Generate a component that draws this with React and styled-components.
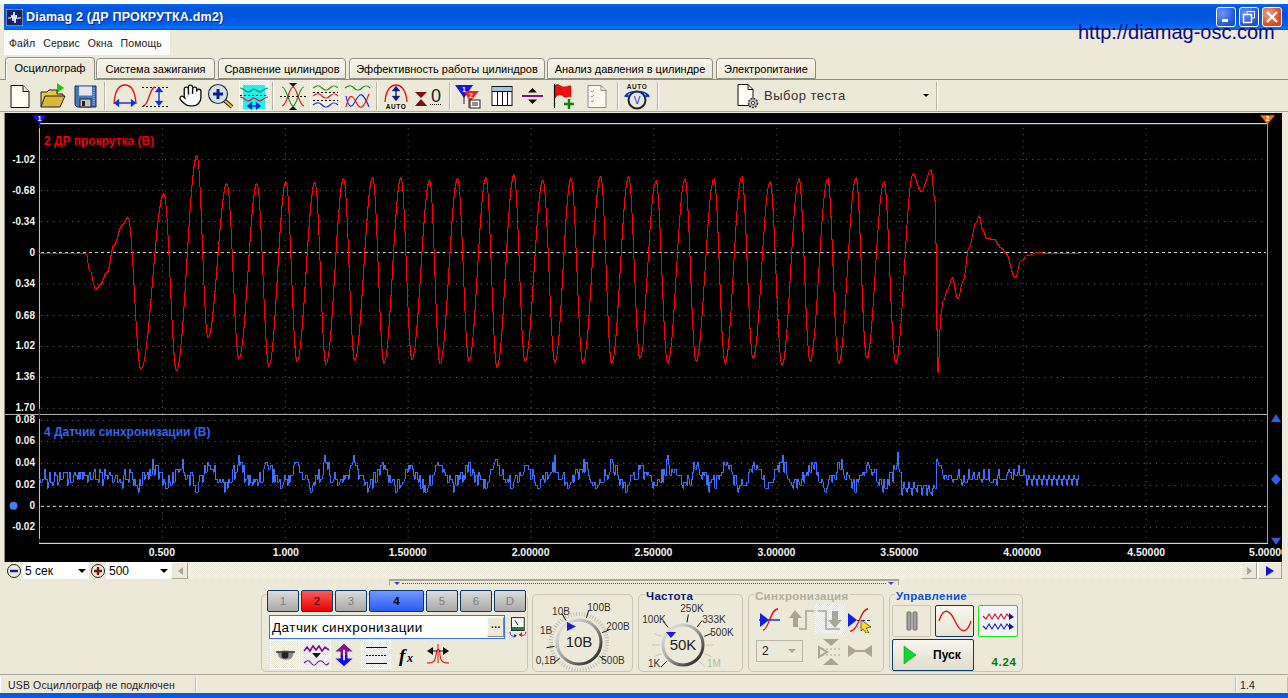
import styled, { createGlobalStyle } from 'styled-components';
import { Hand } from 'lucide-react';

const GlobalStyle = createGlobalStyle`
  html, body { margin: 0; padding: 0; background: #ece9d8; overflow: hidden; }
  * { box-sizing: border-box; }
`;

const FONT = '"Liberation Sans", Arial, sans-serif';
const DITHER = 'repeating-conic-gradient(#fff 0 25%, #e4e0cf 0 50%) 0 0 / 2px 2px';

// ---- window frame ----
const Page = styled.div`
  position: relative;
  width: 1288px;
  height: 698px;
  overflow: hidden;
  display: flex;
  flex-direction: column;
  background: #ece9d8;
  border-top: 4px solid #fbfbf8;
  font-family: ${FONT};
  color: #000;
`;

const TitleBar = styled.div`
  height: 26px;
  margin-left: 4px;
  flex: none;
  display: flex;
  align-items: center;
  padding: 0 6px 0 2px;
  background: linear-gradient(#0a6af0 0, #0058e0 12%, #0054dc 50%, #0060ee 80%, #0a72fa 92%, #0050d0 100%);
`;

const TitleText = styled.span`
  margin-left: 3px;
  flex: 1;
  color: #fff;
  font-size: 12.5px;
  font-weight: bold;
  letter-spacing: 0.2px;
  text-shadow: 1px 1px 0 #0a2a90;
`;

const WinButton = styled.div`
  width: 20px;
  height: 20px;
  margin-left: 3px;
  border: 1px solid #fff;
  border-radius: 3px;
  display: flex;
  align-items: center;
  justify-content: center;
  background: ${p => p.$close
    ? 'radial-gradient(circle at 30% 30%, #f0a080, #d8481c 70%)'
    : 'radial-gradient(circle at 30% 30%, #6a98f8, #1c50d8 75%)'};
`;

const Watermark = styled.div`
  position: absolute;
  left: 1078px;
  top: 16px;
  font-size: 20px;
  line-height: 24px;
  color: #0a0a80;
`;

const MenuRow = styled.div`
  height: 27px;
  flex: none;
`;

const MenuBar = styled.div`
  width: 166px;
  height: 25px;
  margin-left: 4px;
  padding-left: 5px;
  background: #fcfcfa;
  display: flex;
  align-items: center;
  gap: 8px;
  font-size: 10.5px;
  letter-spacing: 0.1px;
  color: #222;
`;

const TabStrip = styled.div`
  height: 23px;
  flex: none;
  display: flex;
  align-items: flex-end;
  padding-left: 5px;
  border-bottom: 1px solid #8f8d80;
`;

const Tab = styled.div`
  width: ${p => p.$w}px;
  margin-right: ${p => p.$gap ?? 2}px;
  height: ${p => (p.$active ? 23 : 21)}px;
  margin-bottom: ${p => (p.$active ? -1 : 0)}px;
  border: 1px solid #8f8d80;
  border-bottom: ${p => (p.$active ? 'none' : '1px solid #8f8d80')};
  border-radius: 4px 4px 0 0;
  background: ${p => (p.$active ? '#ece9d8' : 'linear-gradient(#f6f4ea, #ece9d8)')};
  display: flex;
  align-items: center;
  justify-content: center;
  font-size: 11px;
  position: relative;
  padding-bottom: ${p => (p.$active ? 3 : 0)}px;
  box-shadow: inset 1px 1px 0 #fff;
`;

const Toolbar = styled.div`
  height: 32px;
  flex: none;
  display: flex;
  align-items: center;
  border-bottom: 1px solid #a8a698;
`;

const ToolButton = styled.div`
  width: 30px;
  height: 31px;
  flex: none;
  margin-left: ${p => p.$ml ?? 0}px;
  display: flex;
  align-items: center;
  justify-content: center;
  background: ${p => (p.$pressed ? DITHER : 'none')};
  border: ${p => (p.$pressed ? '1px solid #f8f8f4' : 'none')};
`;

const ToolSep = styled.div`
  width: 2px;
  height: 28px;
  flex: none;
  margin-left: ${p => p.$ml ?? 0}px;
  background: #b8b6a8;
  border-right: 1px solid #fff;
`;

const TestPicker = styled.div`
  width: 202px;
  height: 31px;
  flex: none;
  margin-left: 75px;
  display: flex;
  align-items: center;
  font-size: 13px;
  letter-spacing: 0.5px;
  color: #333;
  gap: 2px;
`;

const PickerText = styled.span`
  flex: 1;
`;

const Caret = styled.span`
  width: 0;
  height: 0;
  margin-right: ${p => p.$mr ?? 7}px;
  border-left: ${p => p.$s ?? 3}px solid transparent;
  border-right: ${p => p.$s ?? 3}px solid transparent;
  border-top: ${p => p.$s ?? 3}px solid ${p => p.$c ?? '#000'};
`;

const Scope = styled.svg`
  display: block;
  flex: none;
  width: 1278px;
  height: 449px;
  margin: 1px 0 0 4px;
  background: #000;
  border-left: 1px solid #8a8a80;
`;

// ---- scroll strip under the plot ----
const ScrollStrip = styled.div`
  height: 17px;
  flex: none;
  margin-left: 5px;
  width: 1277px;
  display: flex;
  align-items: stretch;
  background: #fff;
  font-size: 12px;
`;

const RoundBtn = styled.div`
  width: 17px;
  flex: none;
  background: #ece9d8;
  display: flex;
  align-items: center;
  justify-content: center;
`;

const ComboBox = styled.div`
  width: ${p => p.$w}px;
  flex: none;
  padding-left: 3px;
  background: #fff;
  display: flex;
  align-items: center;
  justify-content: space-between;
`;

const ScrollBtn = styled.div`
  width: ${p => p.$w ?? 17}px;
  flex: none;
  margin-left: ${p => p.$ml ?? 0}px;
  background: #ece9d8;
  border: 1px solid #f8f8f2;
  border-right-color: #a8a698;
  border-bottom-color: #a8a698;
  display: flex;
  align-items: center;
  justify-content: center;
`;

const ScrollTrack = styled.div`
  flex: 1;
  background: ${DITHER};
`;

const Splitter = styled.div`
  width: 510px;
  height: 6px;
  flex: none;
  margin: 0 0 0 389px;
  border: 1px solid #a8a698;
  border-top-width: 2px;
  border-bottom: none;
  display: flex;
  align-items: center;
  justify-content: space-between;
  padding: 0 4px;
`;

const SplitterDots = styled.div`
  flex: 1;
  margin: 0 2px;
  height: 1px;
  border-top: 1px dotted #3050c0;
`;

const Panels = styled.div`
  height: 78px;
  flex: none;
  margin: 9px 0 0 261px;
  display: flex;
`;

const Panel = styled.div`
  width: ${p => p.$w}px;
  margin-right: ${p => p.$mr ?? 5}px;
  height: 78px;
  flex: none;
  border: 1px solid #c8c6b6;
  border-radius: 5px;
  position: relative;
`;

const PanelTitle = styled.div`
  position: absolute;
  left: ${p => p.$x ?? 5}px;
  top: -5px;
  padding: 0 1px;
  background: #ece9d8;
  font-size: 11.5px;
  line-height: 13px;
  font-weight: bold;
  letter-spacing: 0.3px;
  color: ${p => p.$c};
`;

const ChannelRow = styled.div`
  display: flex;
  margin: -5px 0 0 5px;
  gap: 2px;
`;

const ChannelBtn = styled.div`
  width: ${p => p.$w ?? 32}px;
  height: 22px;
  border: 1px solid #0c3a68;
  border-radius: 2px;
  display: flex;
  align-items: center;
  justify-content: center;
  font-size: 11.5px;
  font-weight: ${p => (p.$on ? 'bold' : 'normal')};
  color: ${p => p.$fg ?? (p.$on ? '#000' : '#808080')};
  background: ${p => p.$bg ?? 'linear-gradient(#dcdcdc, #a8a8a8)'};
`;

const SensorRow = styled.div`
  display: flex;
  align-items: center;
  margin: 3px 0 0 7px;
`;

const SensorInput = styled.div`
  width: 240px;
  height: 24px;
  margin-right: 4px;
  border: 1px solid #3a70e0;
  background: #fff;
  display: flex;
  align-items: center;
  justify-content: space-between;
  padding: 1px 0 1px 2px;
  font-size: 13.5px;
  letter-spacing: 0.45px;
`;

const DotsBtn = styled.div`
  width: 17px;
  height: 20px;
  background: #ece9d8;
  border: 1px solid #f8f8f4;
  border-right-color: #888;
  border-bottom-color: #888;
  font-size: 10px;
  line-height: 14px;
  font-weight: bold;
  text-align: center;
`;

const IconRow = styled.div`
  display: flex;
  margin: 1px 0 0 8px;
  gap: ${p => p.$gap ?? 1}px;
`;

const ChanIcon = styled.div`
  width: ${p => p.$w ?? 30}px;
  height: 29px;
  margin-left: ${p => p.$ml ?? 0}px;
  display: flex;
  align-items: center;
  justify-content: center;
  background: ${p => (p.$pressed ? DITHER : 'none')};
  border: ${p => (p.$pressed ? '1px solid #f8f8f4' : 'none')};
`;

const SyncGrid = styled.div`
  display: grid;
  grid-template-columns: 30px 30px 30px 30px;
  grid-auto-rows: 30px;
  margin: 9px 0 0 6px;
  row-gap: 2px;
`;

const SyncCell = styled.div`
  display: flex;
  align-items: center;
  justify-content: center;
  background: ${p => (p.$pressed ? DITHER : 'none')};
`;

const SyncSelect = styled.div`
  grid-column: span 2;
  width: 47px;
  height: 22px;
  margin: 4px 0 0 1px;
  border: 1px solid #b8b6a8;
  display: flex;
  align-items: center;
  justify-content: space-between;
  padding-left: 5px;
  font-size: 12px;
  color: #222;
`;

const ControlGrid = styled.div`
  display: grid;
  grid-template-columns: 39px 39px 40px;
  column-gap: 4px;
  row-gap: 2px;
  margin: 10px 0 0 2px;
`;

const CtrlBtn = styled.div`
  height: 32px;
  border: 1px solid ${p => p.$c ?? '#c8c6b6'};
  border-radius: 2px;
  background: ${p => p.$bg ?? '#ece9d8'};
  display: flex;
  align-items: center;
  justify-content: center;
`;

const StartBtn = styled.div`
  grid-column: span 2;
  height: 32px;
  border: 1px solid #0c3a68;
  border-radius: 2px;
  background: linear-gradient(#f8f6ee, #e0dccb);
  display: flex;
  align-items: center;
  padding-left: 10px;
  gap: 16px;
  font-size: 12px;
  font-weight: bold;
`;

const Version = styled.div`
  align-self: end;
  text-align: center;
  font-size: 11.5px;
  font-weight: bold;
  letter-spacing: 0.6px;
  color: #0a780a;
  padding: 0 0 3px 12px;
  white-space: nowrap;
`;

const StatusBar = styled.div`
  height: 19px;
  flex: none;
  margin-top: 2px;
  border-top: 1px solid #a8a698;
  display: flex;
  font-size: 10.5px;
  line-height: 16px;
  color: #222;
  letter-spacing: 0.15px;
`;

const StatusCell = styled.div`
  width: ${p => p.$w}px;
  padding-left: ${p => p.$pl ?? 3}px;
  margin-top: 2px;
  height: 15px;
  border-right: 1px solid #c0beb0;
  border-left: 1px solid #fff;
`;

const BottomEdge = styled.div`
  height: 5px;
  flex: 1;
  background: #0a5ae0;
`;

// ---- traces ----
const RED = [[38,253],[84,253],[88,270],[94,289],[98,284],[105,272],[112,245],[120,225],[126,217],[139,369],[162,193],[174.5,370],[195,155],[206,337],[225,183],[237,358],[255,183],[267,366],[284,181],[295,361],[313,182],[324,364],[341.7,178],[352.7,360],[370.7,177],[382,363],[399,177],[410,359],[427.7,180],[438,363],[455.7,178],[467,361],[484,177],[495,367],[512,174],[523,361],[541,180],[553,362],[569,178],[581,363],[598.7,176],[609.7,363],[626.7,176],[638,358],[655,180],[666.7,363],[684,178],[695,361],[713,178],[724,363],[740.7,176],[752,358],[769,181],[781,365],[798,178],[809,361],[826.7,178],[837.7,363],[855,177],[865.7,358],[883,181],[894.7,363],[912,173],[920,191],[930,169],[934,200],[937,372],[940,313],[942,300],[947,288],[951,277],[957,298],[962,280],[968,247],[975,222],[978,215],[982,230],[986,238],[993,239],[1000,247],[1005,253],[1014,277],[1020,260],[1026,255],[1036,252],[1047,253],[1078,253]];

const redPath = () => {
  let d = 'M38 253.5';
  let k = 0;
  for (let x = 38; x <= 1078; x++) {
    while (k < RED.length - 2 && x > RED[k + 1][0]) k++;
    const [x0, y0] = RED[k];
    const [x1, y1] = RED[k + 1];
    const t = Math.min(1, (x - x0) / (x1 - x0));
    const y = y0 + (y1 - y0) * (0.5 - 0.5 * Math.cos(Math.PI * t));
    d += `H${x + 0.5}V${Math.round(y) + 0.5}`;
  }
  return d;
};

const noise = i => {
  const s = Math.sin(i * 12.9898) * 43758.5453;
  return s - Math.floor(s);
};

const SAW = [5, 0, -5, 0];

const bluePath = () => {
  let d = '';
  for (let x = 38; x <= 1078; x += 1.25) {
    const i = Math.round(x * 0.8);
    const saw = SAW[i % 4];
    let y;
    if (x < 128) y = 478 + saw * 0.9 + (noise(i) - 0.5) * 12;
    else if (x < 900) {
      const ph = ((x - 323) / 28.7 % 1 + 1) % 1;
      const tri = Math.abs(ph < 0.5 ? ph : ph - 1) * 2;
      y = 459 + Math.pow(tri, 0.6) * 26 + (noise(i) - 0.5) * 16;
    } else if (x < 935) y = 488 + saw * 0.9 + (noise(i) - 0.5) * 6;
    else if (x < 941) y = 458 + (x - 935) * 2;
    else if (x < 1005) y = 478 + saw + (noise(i) - 0.5) * 10;
    else if (x < 1025) y = 473 + saw + (noise(i) - 0.5) * 9;
    else y = 480 + saw;
    y = Math.round(y / 3.3) * 3.3;
    d += `${d ? 'H' : 'M'}${Math.round(x) + 0.5}${d ? 'V' : ' '}${Math.round(y) + 0.5}`;
  }
  return d;
};

const Y_TOP = [['-1.02',159],['-0.68',190],['-0.34',221],['0',252],['0.34',283.5],['0.68',315],['1.02',346],['1.36',377],['1.70',408]];
const Y_BOT = [['0.08',420],['0.06',441],['0.04',463],['0.02',485],['0',506],['-0.02',527]];
const X_LABELS = [['0.500',161],['1.000',285],['1.50000',407],['2.00000',530],['2.50000',653],['3.00000',776],['3.50000',899],['4.00000',1022],['4.50000',1146],['5.00000',1268]];
const X_GRID = [161,284,407,530,653,776,899,1022.5,1145.5];

const ScopeView = () => (
  <Scope viewBox="4 113 1278 449">
    <g stroke="#6a6a6a" strokeDasharray="1 5.2" strokeWidth="1">
      {X_GRID.map(x => <line key={x} x1={x + 0.5} x2={x + 0.5} y1="128" y2="543" />)}
      {[...Y_TOP, ...Y_BOT].filter(r => r[0] !== '0').map(r => (
        <line key={r[0] + r[1]} x1="40" x2="1266" y1={r[1] + 0.5} y2={r[1] + 0.5} />
      ))}
    </g>
    <g stroke="#e0e0e0" strokeDasharray="3 3">
      <line x1="40" x2="1266" y1="252.5" y2="252.5" />
      <line x1="40" x2="1266" y1="506.5" y2="506.5" />
    </g>
    <line x1="38" x2="1268" y1="123.5" y2="123.5" stroke="#fff" />
    <line x1="4" x2="1268" y1="414.5" y2="414.5" stroke="#b8b8b8" />
    <line x1="38" x2="1268" y1="543.5" y2="543.5" stroke="#fff" />
    <line x1="38.5" x2="38.5" y1="123" y2="543" stroke="#c8c8c8" />
    <line x1="38.5" x2="38.5" y1="121" y2="128" stroke="#1010ff" />
    <line x1="38.5" x2="38.5" y1="409" y2="414" stroke="#1010ff" />
    <line x1="38.5" x2="38.5" y1="414" y2="419" stroke="#1010ff" />
    <line x1="38.5" x2="38.5" y1="539" y2="543" stroke="#1010ff" />
    <line x1="1267.5" x2="1267.5" y1="121" y2="543" stroke="#ff8a30" />
    <path d="M31 115H46L38.5 124Z" fill="#1010f0" />
    <text x="38.5" y="120.5" fill="#fff" fontSize="6.5" fontWeight="bold" textAnchor="middle" fontFamily={FONT}>1</text>
    <path d="M1260 115H1275L1267.5 124Z" fill="#ff6a10" />
    <text x="1267.5" y="120.5" fill="#fff" fontSize="6.5" fontWeight="bold" textAnchor="middle" fontFamily={FONT}>2</text>

    <g fill="#f4f4f4" fontSize="10px" fontWeight="bold" fontFamily={FONT} textAnchor="end">
      {[...Y_TOP, ...Y_BOT].map(r => (
        <text key={r[0] + r[1]} x="34" y={r[1] + 3.5}>{r[0]}</text>
      ))}
    </g>
    <g fill="#f4f4f4" fontSize="10.5px" fontWeight="bold" fontFamily={FONT} textAnchor="middle">
      {X_LABELS.map(r => <text key={r[0]} x={r[1]} y="556">{r[0]}</text>)}
    </g>
    <text x="43" y="145" fill="#f00000" fontSize="12px" fontWeight="bold" fontFamily={FONT}>2 ДР прокрутка (В)</text>
    <text x="43" y="436" fill="#3366ee" fontSize="12px" fontWeight="bold" fontFamily={FONT}>4 Датчик синхронизации (В)</text>

    <path d={redPath()} fill="none" stroke="#ff0000" strokeWidth="1" shapeRendering="crispEdges" />
    <path d={bluePath()} fill="none" stroke="#3a70ff" strokeWidth="1" shapeRendering="crispEdges" />

    <circle cx="12.5" cy="506" r="4" fill="#4a78f0" />
    <path d="M1276 414L1281 422H1271Z" fill="#2a60e8" />
    <path d="M1276 474L1281 479.5L1276 485L1271 479.5Z" fill="#2a60e8" />
    <path d="M1271 538H1281L1276 545Z" fill="#2a60e8" />
  </Scope>
);

// ---- icons: all on a 28x28 canvas unless noted ----
const Ico = ({ children, w = 28, h = 28 }) => (
  <svg width={w} height={h} viewBox={`0 0 ${w} ${h}`}>{children}</svg>
);

const ArrowH = ({ x, y, w, c = '#1030e0' }) => (
  <g fill={c} stroke={c}>
    <line x1={x + 3} x2={x + w - 3} y1={y} y2={y} strokeWidth="1.4" />
    <path d={`M${x} ${y}l5 -4v8zM${x + w} ${y}l-5 -4v8z`} strokeWidth="0.3" />
  </g>
);

const ArrowV = ({ x, y, h, c = '#1030e0' }) => (
  <g fill={c} stroke={c}>
    <line x1={x} x2={x} y1={y + 3} y2={y + h - 3} strokeWidth="1.4" />
    <path d={`M${x} ${y}l-4 5h8zM${x} ${y + h}l-4 -5h8z`} strokeWidth="0.3" />
  </g>
);

const Wave = ({ d, c, w = 1.1 }) => <path d={d} fill="none" stroke={c} strokeWidth={w} />;

const Ic = {
  New: () => (
    <Ico>
      <path d="M5 3.5H17L23 9.5V25.5H5Z" fill="#fffdf0" stroke="#111" />
      <path d="M17 3.5V9.5H23" fill="#e8e4d0" stroke="#111" />
    </Ico>
  ),
  Open: () => (
    <Ico>
      <path d="M19 1L26 6L19 11Z" fill="#18c818" />
      <path d="M3 25V10H9L11 8H19V12H25V14" fill="#e8c848" stroke="#222" />
      <path d="M3 25L7 14H27L22 25Z" fill="#d8b838" stroke="#222" />
    </Ico>
  ),
  Save: () => (
    <Ico>
      <path d="M4 4H25V25H6L4 23Z" fill="#4878b8" stroke="#1a2a50" />
      <rect x="8" y="4.5" width="13" height="9" fill="#e4e4ec" />
      <rect x="9" y="17" width="11" height="8" fill="#c4c4c8" stroke="#222" />
      <rect x="11" y="19" width="3" height="5" fill="#222" />
      <path d="M23 6v18" stroke="#a0c0f0" strokeDasharray="1 1" />
    </Ico>
  ),
  SpanH: () => (
    <Ico>
      <Wave c="#e01010" w="1.3" d="M3 22C4 6 10 3 14 3S24 6 25 22" />
      <ArrowH x={3} y={21} w={22} />
    </Ico>
  ),
  SpanV: () => (
    <Ico>
      <line x1="1" x2="27" y1="5.5" y2="5.5" stroke="#111" strokeDasharray="2 2" />
      <line x1="1" x2="27" y1="24.5" y2="24.5" stroke="#111" strokeDasharray="2 2" />
      <Wave c="#e01010" w="1.3" d="M2 24C8 24 8 6 14 5" />
      <ArrowV x={18} y={5} h={19} />
    </Ico>
  ),
  Zoom: () => (
    <Ico>
      <path d="M17 17L26 25" stroke="#222" strokeWidth="4" />
      <path d="M17 17L26 25" stroke="#e8c030" strokeWidth="2" />
      <circle cx="12" cy="12" r="9.5" fill="#d0e4f4" stroke="#333" strokeWidth="1.2" />
      <path d="M12 7V17M7 12H17" stroke="#101a90" strokeWidth="3" />
    </Ico>
  ),
  Cursor: () => (
    <Ico>
      <rect x="3" y="3" width="22" height="24" fill="#20f0f0" />
      <Wave c="#109010" d="M0 6C4 6 5 10 8 10S12 7 14 7S18 10 20 10S24 6 28 6" />
      <line x1="0" x2="28" y1="13.5" y2="13.5" stroke="#111" strokeDasharray="2 2" />
      <Wave c="#e01010" d="M0 15C4 15 5 19 8 19S12 16 14 16S18 19 20 19S24 15 28 15" />
      <ArrowH x={7} y={24} w={14} />
    </Ico>
  ),
  Cross: () => (
    <Ico>
      <Wave c="#109010" d="M3 5C8 5 10 24 14 24S20 5 25 5" />
      <Wave c="#e01010" d="M3 24C8 24 10 5 14 5S20 24 25 24" />
      <line x1="1" x2="27" y1="14.5" y2="14.5" stroke="#111" strokeDasharray="2 2" />
      <path d="M14 1H10L14 5L18 1ZM14 28H10L14 24L18 28Z" fill="#111" />
    </Ico>
  ),
  Three: () => (
    <Ico>
      <Wave c="#109010" d="M2 6C6 3 8 3 11 6S16 9 19 6S24 3 27 6" />
      <line x1="2" x2="27" y1="10.5" y2="10.5" stroke="#111" strokeDasharray="2 2" />
      <Wave c="#e01010" d="M2 14C6 11 8 11 11 14S16 17 19 14S24 11 27 14" />
      <line x1="2" x2="27" y1="18.5" y2="18.5" stroke="#111" strokeDasharray="2 2" />
      <Wave c="#1020e0" d="M2 23C6 20 8 20 11 23S16 26 19 23S24 20 27 23" />
    </Ico>
  ),
  Mixed: () => (
    <Ico>
      <Wave c="#109010" d="M2 6C6 3 8 3 11 6S16 9 19 6S24 3 27 6" />
      <Wave c="#1020e0" d="M3 14C6 28 9 26 13 18S20 10 26 25" />
      <Wave c="#e01010" d="M3 25C6 12 9 12 13 20S20 28 26 12" />
    </Ico>
  ),
  AutoV: () => (
    <Ico>
      <Wave c="#e01010" w="1.3" d="M3 20C4 6 10 3 14 3S24 6 25 20" />
      <ArrowV x={14} y={4} h={15} c="#101a90" />
      <text x="14" y="27" fontSize="6.5" fontWeight="bold" textAnchor="middle" letterSpacing="0.6" fontFamily={FONT}>AUTO</text>
    </Ico>
  ),
  AutoZero: () => (
    <Ico>
      <path d="M1 10H13L7 16ZM1 24H13L7 17Z" fill="#7a1010" />
      <text x="17" y="20" fontSize="18" fontFamily={FONT} fill="#222">0</text>
      <line x1="16" x2="28" y1="22.5" y2="22.5" stroke="#222" strokeDasharray="1 1" />
    </Ico>
  ),
  Markers: () => (
    <Ico>
      <path d="M1 3H19L10 16Z" fill="#1414e8" />
      <path d="M10 9H25L16 20Z" fill="#f02020" />
      <path d="M10 12V22M15 18V26" stroke="#222" />
      <text x="10" y="10" fontSize="7" fill="#fff" fontWeight="bold" textAnchor="middle" fontFamily={FONT}>1</text>
      <text x="17" y="16" fontSize="7" fill="#fff" fontWeight="bold" textAnchor="middle" fontFamily={FONT}>2</text>
      <rect x="16" y="18" width="10" height="8" fill="#fff" stroke="#222" />
      <path d="M19 20V24M21 20V24M23 20V24" stroke="#222" />
    </Ico>
  ),
  Table: () => (
    <Ico>
      <rect x="4" y="4.5" width="20" height="19" fill="#fff" stroke="#111" />
      <rect x="4.5" y="5" width="19" height="4" fill="#a0c4e8" />
      <line x1="4" x2="24" y1="9.5" y2="9.5" stroke="#111" />
      <path d="M9.5 9.5V23.5M14.5 9.5V23.5M19.5 9.5V23.5" stroke="#111" />
    </Ico>
  ),
  Divider: () => (
    <Ico>
      <rect x="4" y="13" width="21" height="2" fill="#801080" />
      <path d="M14.5 6L19 10.5H10ZM14.5 22L19 17.5H10Z" fill="#111" />
    </Ico>
  ),
  Flag: () => (
    <Ico>
      <path d="M5.5 2V26" stroke="#111" strokeWidth="1.2" />
      <path d="M6 3C10 1 12 5 15 5S20 3 22 4V15C19 14 17 16 15 15C12 12 9 12 6 16Z" fill="#f01010" stroke="#500" strokeWidth="0.4" />
      <path d="M20 17V27M15 22H25" stroke="#108010" strokeWidth="2.4" />
    </Ico>
  ),
  Report: () => (
    <Ico>
      <path d="M5 3.5H18L23 8.5V25.5H5Z" fill="#fbf9ee" stroke="#8a8a88" />
      <path d="M8 9l1 1 2-2M8 14l1 1 2-2M8 19l1 1 2-2" stroke="#9a9a98" fill="none" />
      <path d="M18 3.5V8.5H23" fill="none" stroke="#8a8a88" />
    </Ico>
  ),
  AutoGauge: () => (
    <Ico>
      <text x="14" y="7" fontSize="6.5" fontWeight="bold" textAnchor="middle" letterSpacing="0.6" fontFamily={FONT} fill="#222">AUTO</text>
      <circle cx="14" cy="18" r="8.5" fill="#e8e8e0" stroke="#222" strokeWidth="2" />
      <Wave c="#1030e0" w="1.4" d="M2 14C6 8 22 8 26 14" />
      <path d="M1 15L5 11L6 15ZM27 15L23 11L22 15Z" fill="#1030e0" />
      <text x="14" y="21.5" fontSize="10" textAnchor="middle" fill="#1030e0" fontFamily={FONT}>V</text>
    </Ico>
  ),
  TestDoc: () => (
    <Ico>
      <path d="M4 2.5H14L19 7.5V23.5H4Z" fill="#fffdf4" stroke="#111" />
      <path d="M14 2.5V7.5H19" fill="none" stroke="#111" />
      <circle cx="19" cy="21" r="4.5" fill="#b8b8b8" stroke="#444" strokeWidth="1.6" strokeDasharray="2 1" />
      <circle cx="19" cy="21" r="1.6" fill="#fff" stroke="#444" />
    </Ico>
  ),
  Eye: () => (
    <Ico>
      <path d="M6 11C11 9 18 9 23 11L21 17C16 20 11 19 8 16Z" fill="#8a8a8a" />
      <circle cx="14" cy="14" r="3.5" fill="#222" />
      <path d="M5 11H24" stroke="#333" strokeWidth="1.4" />
    </Ico>
  ),
  Amp: () => (
    <Ico>
      <Wave c="#801080" w="1.6" d="M2 10L5 6L8 10L11 5L14 9L17 5L20 10L23 6L27 9" />
      <path d="M10 12H19L14.5 17Z" fill="#111" />
      <Wave c="#801080" d="M2 22C5 19 7 19 9 22S13 25 15 22S20 19 22 22S25 24 27 22" />
    </Ico>
  ),
  UpDown: () => (
    <Ico>
      <path d="M14 1L24 10H18V14H10V10H4Z" fill="#801090" />
      <path d="M14 27L24 18H18V14H10V18H4Z" fill="#1010e8" />
      <path d="M14 8V20" stroke="#fff" strokeWidth="2" />
    </Ico>
  ),
  Lines: () => (
    <Ico>
      <line x1="4" x2="25" y1="6.5" y2="6.5" stroke="#111" />
      <line x1="4" x2="25" y1="14.5" y2="14.5" stroke="#111" strokeDasharray="2 1" />
      <line x1="4" x2="25" y1="22.5" y2="22.5" stroke="#111" />
    </Ico>
  ),
  Fx: () => (
    <Ico>
      <text x="4" y="21" fontSize="19" fontWeight="bold" fontStyle="italic" fontFamily='"Liberation Serif", serif'>f</text>
      <text x="12" y="21" fontSize="12" fontWeight="bold" fontStyle="italic" fontFamily='"Liberation Serif", serif'>x</text>
    </Ico>
  ),
  Peak: () => (
    <Ico>
      <Wave c="#e01010" d="M3 22C9 22 11 21 12 14C13 8 14 8 14 8C15 8 16 8 16 14C17 21 19 22 25 22" />
      <line x1="14" x2="14" y1="3" y2="22" stroke="#e01010" />
      <path d="M3 10L9 6V14ZM25 10L19 6V14Z" fill="#111" />
      <path d="M8 10H13M15 10H20" stroke="#111" />
    </Ico>
  ),
  Meter: () => (
    <Ico w={18} h={22}>
      <rect x="2.5" y="1.5" width="13" height="13" fill="#f8f8f4" stroke="#222" />
      <rect x="3" y="11" width="12" height="3" fill="#108040" />
      <path d="M9 9L6 4" stroke="#222" />
      <path d="M1 16C1 20 4 21 7 20" fill="none" stroke="#1030d0" />
      <path d="M5 18L8 20L5 22Z" fill="#1030d0" />
      <path d="M17 16C17 20 14 20 11 19" fill="none" stroke="#e01010" />
      <path d="M13 16L10 19L13 21Z" fill="#e01010" />
    </Ico>
  ),
  SyncUp: () => (
    <Ico>
      <Wave c="#1020d0" w="1.4" d="M3 15H24" />
      <path d="M4 8L13 15L4 22Z" fill="#1020e8" />
      <Wave c="#e01010" w="1.3" d="M7 25C13 25 14 4 22 4" />
    </Ico>
  ),
  EdgeUp: () => (
    <Ico>
      <path d="M13 24H20V6H28" fill="none" stroke="#a8a698" strokeWidth="1.6" />
      <path d="M9 5L16 13H12V22H7V13H3Z" fill="#a8a698" />
    </Ico>
  ),
  EdgeDown: () => (
    <Ico>
      <path d="M2 6H10V24H24" fill="none" stroke="#a8a698" strokeWidth="1.6" />
      <path d="M19 23L12 15H16V6H22V15H26Z" fill="#a8a698" />
    </Ico>
  ),
  SyncCur: () => (
    <Ico>
      <path d="M2 8L11 15L2 22Z" fill="#1020e8" />
      <line x1="11" x2="26" y1="15.5" y2="15.5" stroke="#1020d0" strokeDasharray="3 2" />
      <Wave c="#e01010" w="1.3" d="M4 26C13 26 14 4 22 4" />
      <path d="M15 15L25 22L20 23L23 28L20 28L17 24L15 26Z" fill="#f8e020" stroke="#111" strokeWidth="0.6" />
    </Ico>
  ),
  SqueezeV: () => (
    <Ico>
      <path d="M7 2H23L15 9ZM7 28H23L15 21Z" fill="#a8a698" />
      <path d="M3 10L11 15L3 20Z" fill="none" stroke="#a8a698" strokeWidth="2" />
      <path d="M2 12H26M2 18H26" stroke="#a8a698" strokeDasharray="2 2" />
    </Ico>
  ),
  SqueezeH: () => (
    <Ico>
      <path d="M2 8L11 14L2 20ZM26 8L17 14L26 20Z" fill="#a8a698" />
      <path d="M8 14H20" stroke="#a8a698" strokeWidth="2" />
    </Ico>
  ),
  Pause: () => (
    <Ico>
      <rect x="9" y="5" width="4" height="18" rx="1" fill="#a0a098" stroke="#70706a" />
      <rect x="15" y="5" width="4" height="18" rx="1" fill="#a0a098" stroke="#70706a" />
    </Ico>
  ),
  Sine: () => (
    <Ico w={36} h={28}>
      <Wave c="#e01010" w="1.3" d="M2 14C6 1 12 1 18 14S30 27 34 14" />
    </Ico>
  ),
  Multi: () => (
    <Ico w={34} h={28}>
      <Wave c="#e01010" d="M2 9L5 12L8 7L11 12L14 7L17 12L20 7L23 12L26 7L29 11" />
      <path d="M28 6L33 10L28 13Z" fill="#101a90" />
      <Wave c="#1020d0" d="M2 19L5 22L8 17L11 22L14 17L17 22L20 17L23 22L26 17L29 21" />
      <path d="M28 16L33 20L28 23Z" fill="#101a90" />
    </Ico>
  ),
};

// ---- dials ----
const polar = (cx, cy, r, deg) => {
  const a = (deg - 90) * Math.PI / 180;
  return [cx + r * Math.cos(a), cy + r * Math.sin(a)];
};

const Tick = ({ cx, cy, r0, r1, deg, c, w = 1 }) => {
  const [x0, y0] = polar(cx, cy, r0, deg);
  const [x1, y1] = polar(cx, cy, r1, deg);
  return <line x1={x0} y1={y0} x2={x1} y2={y1} stroke={c} strokeWidth={w} />;
};

const DialSvg = styled.svg`
  display: block;
  font-family: ${FONT};
`;

const Dial = ({ box, cx, cy, r, value, labels, ticks, fine, pointer, gradId }) => (
  <DialSvg width={box[2]} height={box[3]} viewBox={box.join(' ')}>
    <defs>
      <linearGradient id={gradId} x1="0" y1="0" x2="1" y2="1">
        <stop offset="0" stopColor="#f0f0f0" />
        <stop offset="0.45" stopColor="#a8a8a8" />
        <stop offset="1" stopColor="#111" />
      </linearGradient>
    </defs>
    {fine && <circle cx={cx} cy={cy} r={r + 6} fill="none" stroke="#c0beae" strokeWidth="4" strokeDasharray="1 1.8" />}
    {ticks.map(t => <Tick key={t.deg} cx={cx} cy={cy} r0={r + 3} r1={r + 11} deg={t.deg} c={t.c ?? '#111'} />)}
    <circle cx={cx} cy={cy} r={r} fill="#ece9d8" stroke={`url(#${gradId})`} strokeWidth="3" />
    <path d={pointer} fill="#1818e8" />
    <text x={cx} y={cy + 5} fontSize="15px" textAnchor="middle" fill="#222">{value}</text>
    {labels.map(l => (
      <text key={l[0]} x={l[1]} y={l[2] + 3.5} fontSize="10px" textAnchor="middle" fill={l[3] ?? '#333'}>{l[0]}</text>
    ))}
  </DialSvg>
);

const VOLT_LABELS = [['10В',562,611],['100В',600,607],['1В',547,630],['200В',619,626],['0,1В',547,660],['500В',614,660]];
const VOLT_TICKS = [{ deg: -130 }, { deg: -100 }, { deg: -31 }, { deg: 17 }, { deg: 68 }, { deg: 125 }];
const FREQ_LABELS = [['100K',655,619],['250K',693,608],['333K',715,619],['500K',723,632],['1K',655,663],['1M',715,663,'#b8b6a8']];
const FREQ_TICKS = [
  { deg: -135 }, { deg: -112, c: '#c8c6b6' }, { deg: -90, c: '#c8c6b6' }, { deg: -68, c: '#c8c6b6' },
  { deg: -40 }, { deg: 10 }, { deg: 38 }, { deg: 68 },
  { deg: 90, c: '#c8c6b6' }, { deg: 112, c: '#c8c6b6' }, { deg: 135, c: '#c8c6b6' },
];

const TOOLS = [
  { I: Ic.New, ml: 5 }, { I: Ic.Open, ml: 2 }, { I: Ic.Save, ml: 3 },
  { sep: 4 },
  { I: Ic.SpanH, ml: 4 }, { I: Ic.SpanV }, { hand: true, ml: 5 }, { I: Ic.Zoom }, { I: Ic.Cursor, ml: 4, pressed: true },
  { sep: 3 },
  { I: Ic.Cross, ml: 4 }, { I: Ic.Three, ml: 2, pressed: true }, { I: Ic.Mixed, ml: 2 },
  { sep: 4 },
  { I: Ic.AutoV, ml: 3 }, { I: Ic.AutoZero, ml: 2 },
  { sep: 6 },
  { I: Ic.Markers, ml: 2 }, { I: Ic.Table, ml: 4 }, { I: Ic.Divider }, { I: Ic.Flag, ml: 1 }, { I: Ic.Report, ml: 4 },
  { sep: 5 },
  { I: Ic.AutoGauge, ml: 3 },
  { sep: 5 },
];

const TABS = [
  ['Осциллограф', 90, 1, true], ['Система зажигания', 119, 3], ['Сравнение цилиндров', 128, 3],
  ['Эффективность работы цилиндров', 196, 2], ['Анализ давления в цилиндре', 166, 3], ['Электропитание', 100, 0],
];

const CHANNELS = [
  { n: '1' },
  { n: '2', bg: 'linear-gradient(#ff5a5a, #e80000)', fg: '#300' },
  { n: '3' },
  { n: '4', w: 55, on: true, bg: 'linear-gradient(#7298ff, #2a5cf0)' },
  { n: '5' }, { n: '6' }, { n: 'D' },
];

export default function App() {
  return (
    <>
      <GlobalStyle />
      <Page>
        <TitleBar>
          <svg width="17" height="17" viewBox="0 0 17 17">
            <rect width="17" height="17" fill="#12246a" stroke="#cdd6f4" />
            <path d="M2 9H5L6 6L7 12L8 3L9 14L10 6L11 10L12 9H15" fill="none" stroke="#fff" />
          </svg>
          <TitleText>Diamag 2 (ДР ПРОКРУТКА.dm2)</TitleText>
          <WinButton>
            <svg width="12" height="12" viewBox="0 0 12 12"><rect x="2" y="8" width="6" height="3" fill="#fff" /></svg>
          </WinButton>
          <WinButton>
            <svg width="14" height="14" viewBox="0 0 14 14" fill="none" stroke="#fff">
              <path d="M5 3.5V1.5H12.5V8H10" /><rect x="1.5" y="4.5" width="8" height="8" strokeWidth="1.4" />
            </svg>
          </WinButton>
          <WinButton $close>
            <svg width="12" height="12" viewBox="0 0 12 12"><path d="M1 1L11 11M11 1L1 11" stroke="#fff" strokeWidth="2.2" /></svg>
          </WinButton>
        </TitleBar>
        <Watermark>http://diamag-osc.com</Watermark>

        <MenuRow>
          <MenuBar>
            <span>Файл</span><span>Сервис</span><span>Окна</span><span>Помощь</span>
          </MenuBar>
        </MenuRow>

        <TabStrip>
          {TABS.map(t => <Tab key={t[0]} $w={t[1]} $gap={t[2]} $active={t[3]}>{t[0]}</Tab>)}
        </TabStrip>

        <Toolbar>
          {TOOLS.map((t, i) => {
            if (t.sep) return <ToolSep key={i} $ml={t.sep} />;
            return (
              <ToolButton key={i} $ml={t.ml} $pressed={t.pressed}>
                {t.hand ? <Hand size={25} strokeWidth={1.3} fill="#fff" color="#111" /> : <t.I />}
              </ToolButton>
            );
          })}
          <TestPicker>
            <Ic.TestDoc />
            <PickerText>Выбор теста</PickerText>
            <Caret />
          </TestPicker>
          <ToolSep />
        </Toolbar>

        <ScopeView />

        <ScrollStrip>
          <RoundBtn>
            <svg width="16" height="16" viewBox="0 0 16 16">
              <circle cx="8" cy="8" r="6.5" fill="#ece9d8" stroke="#222" /><path d="M4 8H12" stroke="#101a90" strokeWidth="2.4" />
            </svg>
          </RoundBtn>
          <ComboBox $w={67}>5 сек<Caret $s={4} $mr={3} /></ComboBox>
          <RoundBtn>
            <svg width="16" height="16" viewBox="0 0 16 16">
              <circle cx="8" cy="8" r="6.5" fill="#ece9d8" stroke="#222" /><path d="M4 8H12M8 4V12" stroke="#801010" strokeWidth="2.4" />
            </svg>
          </RoundBtn>
          <ComboBox $w={65}>500<Caret $s={4} $mr={3} /></ComboBox>
          <ScrollBtn $w={17}>
            <svg width="8" height="10"><path d="M7 1V9L2 5Z" fill="#a8a698" /></svg>
          </ScrollBtn>
          <ScrollTrack />
          <ScrollBtn $w={16}>
            <svg width="8" height="10"><path d="M2 1V9L7 5Z" fill="#a8a698" /></svg>
          </ScrollBtn>
          <ScrollBtn $w={24} $ml={1}>
            <svg width="10" height="12"><path d="M1 1V11L9 6Z" fill="#1010e0" /></svg>
          </ScrollBtn>
        </ScrollStrip>

        <Splitter>
          <Caret $c="#3050c0" $s={3} $mr={0} />
          <SplitterDots />
          <Caret $c="#3050c0" $s={3} $mr={0} />
        </Splitter>

        <Panels>
          <Panel $w={267} $mr={4}>
            <ChannelRow>
              {CHANNELS.map(c => (
                <ChannelBtn key={c.n} $w={c.w} $on={c.on} $bg={c.bg} $fg={c.fg}>{c.n}</ChannelBtn>
              ))}
            </ChannelRow>
            <SensorRow>
              <SensorInput>
                Датчик синхронизации
                <DotsBtn>...</DotsBtn>
              </SensorInput>
              <Ic.Meter />
            </SensorRow>
            <IconRow>
              <ChanIcon $pressed><Ic.Eye /></ChanIcon>
              <ChanIcon $pressed><Ic.Amp /></ChanIcon>
              <ChanIcon $w={24}><Ic.UpDown /></ChanIcon>
              <ChanIcon $ml={4} $pressed><Ic.Lines /></ChanIcon>
              <ChanIcon $w={28} $ml={3}><Ic.Fx /></ChanIcon>
              <ChanIcon $w={28}><Ic.Peak /></ChanIcon>
            </IconRow>
          </Panel>

          <Panel $w={101}>
            <Dial
              box={[534, 595, 99, 76]} cx={580} cy={642} r={22} value="10В" gradId="voltRing" fine
              labels={VOLT_LABELS} ticks={VOLT_TICKS} pointer="M568 622L577 626.5L568 631Z"
            />
          </Panel>

          <Panel $w={105} $mr={5}>
            <PanelTitle $c="#101a70" $x={6}>Частота</PanelTitle>
            <Dial
              box={[640, 595, 103, 76]} cx={684} cy={645} r={20} value="50K" gradId="freqRing"
              labels={FREQ_LABELS} ticks={FREQ_TICKS} pointer="M667 632H677L672 638Z"
            />
          </Panel>

          <Panel $w={136}>
            <PanelTitle $c="#b0ae9e" $x={5}>Синхронизация</PanelTitle>
            <SyncGrid>
              <SyncCell><Ic.SyncUp /></SyncCell>
              <SyncCell><Ic.EdgeUp /></SyncCell>
              <SyncCell $pressed><Ic.EdgeDown /></SyncCell>
              <SyncCell><Ic.SyncCur /></SyncCell>
              <SyncSelect>2<Caret $c="#a8a698" $s={4} $mr={6} /></SyncSelect>
              <SyncCell><Ic.SqueezeV /></SyncCell>
              <SyncCell><Ic.SqueezeH /></SyncCell>
            </SyncGrid>
          </Panel>

          <Panel $w={134}>
            <PanelTitle $c="#1050d8" $x={5}>Управление</PanelTitle>
            <ControlGrid>
              <CtrlBtn><Ic.Pause /></CtrlBtn>
              <CtrlBtn $c="#0c3a68" $bg="linear-gradient(#f8f6ee, #e8e4d4)"><Ic.Sine /></CtrlBtn>
              <CtrlBtn $c="#20e020" $bg="#f4f4f8"><Ic.Multi /></CtrlBtn>
              <StartBtn>
                <svg width="14" height="20"><path d="M1 1V19L13 10Z" fill="#10d830" stroke="#108020" strokeWidth="0.5" /></svg>
                Пуск
              </StartBtn>
              <Version>4.24</Version>
            </ControlGrid>
          </Panel>
        </Panels>

        <StatusBar>
          <StatusCell $w={196} $pl={7}>USB Осциллограф не подключен</StatusCell>
          <StatusCell $w={1040} />
          <StatusCell $w={52}>1.4</StatusCell>
        </StatusBar>
        <BottomEdge />
      </Page>
    </>
  );
}
